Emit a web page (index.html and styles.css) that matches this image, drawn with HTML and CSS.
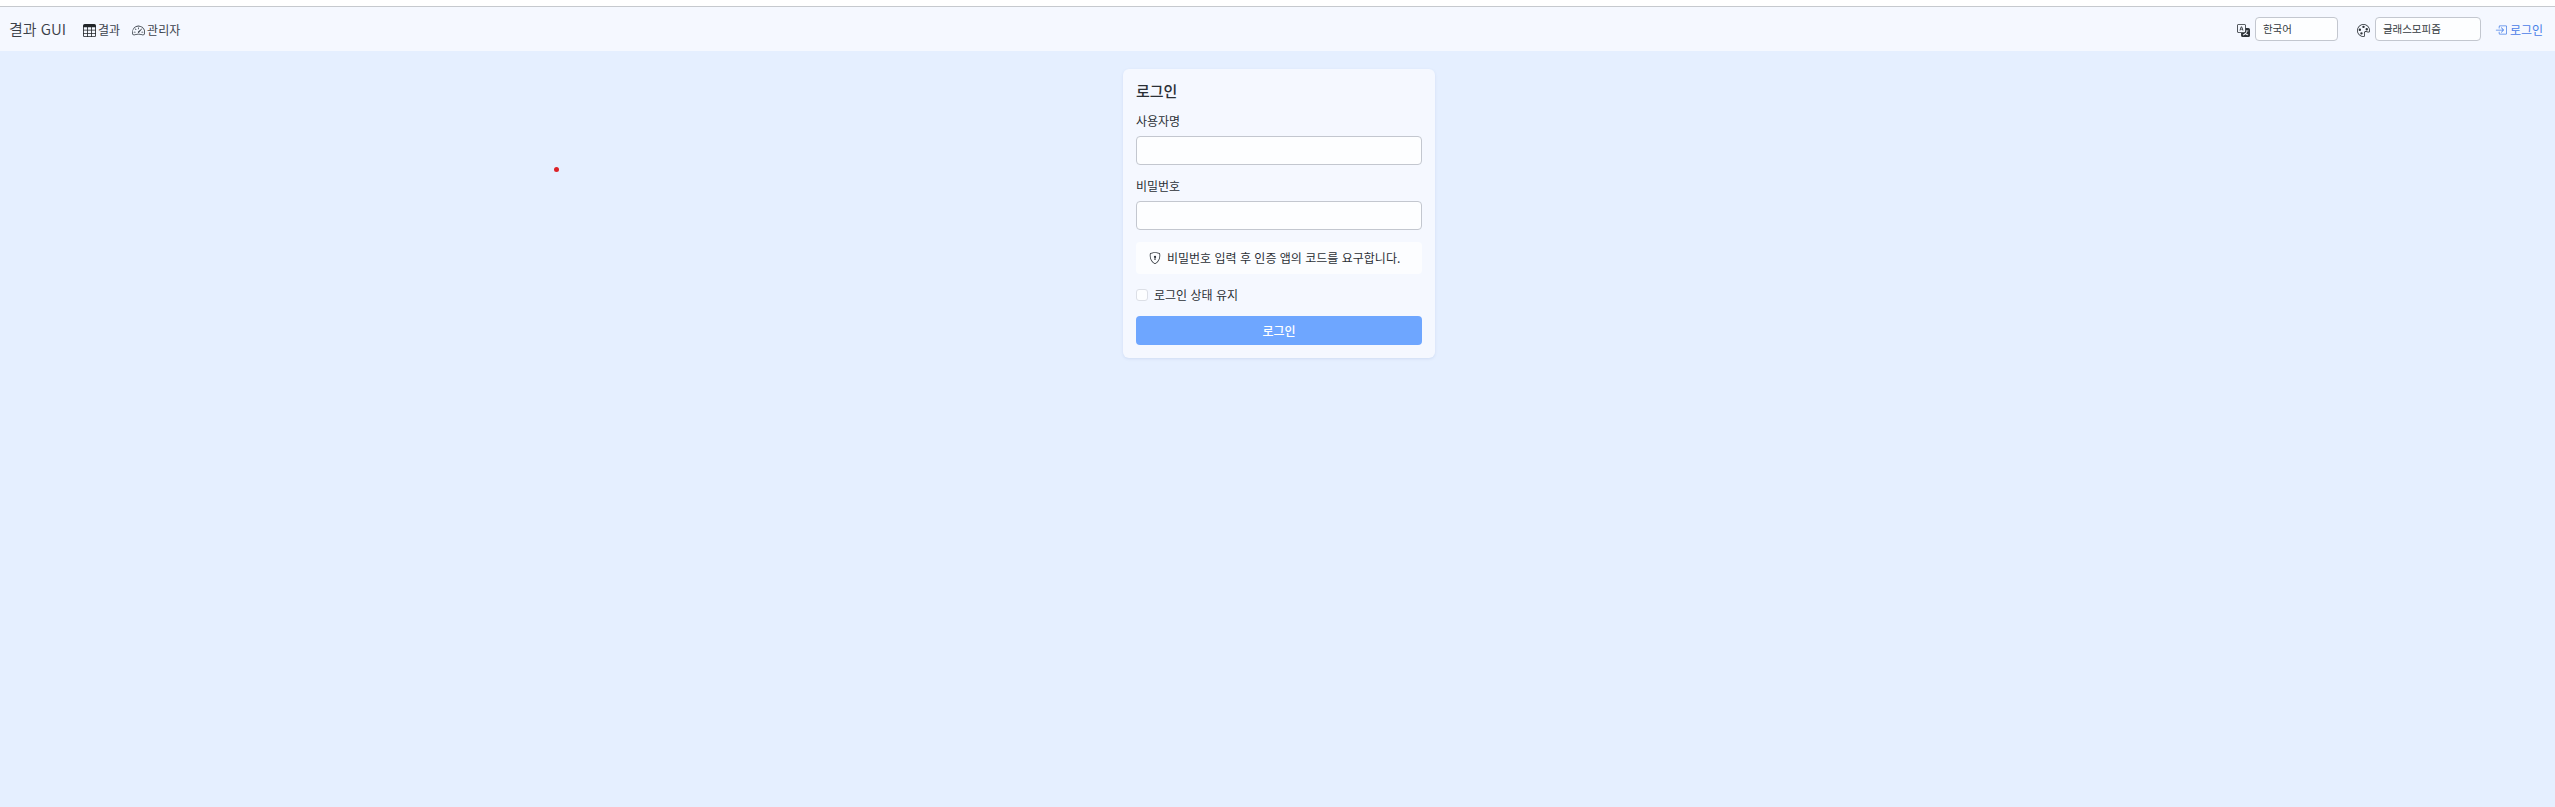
FILE: index.html
```html
<!DOCTYPE html>
<html lang="ko">
<head>
<meta charset="utf-8">
<title>결과 GUI</title>
<link rel="stylesheet" href="styles.css">
</head>
<body>
<div class="top-edge"></div>
<nav class="navbar">
  <a class="brand">결과 GUI</a>
  <a class="nav-link results"><svg class="icon" viewBox="0 0 16 16"><path d="M0 2a2 2 0 0 1 2-2h12a2 2 0 0 1 2 2v12a2 2 0 0 1-2 2H2a2 2 0 0 1-2-2zm15 2h-4v3h4zm0 4h-4v3h4zm0 4h-4v3h3a1 1 0 0 0 1-1zm-5 3v-3H6v3zm-5 0v-3H1v2a1 1 0 0 0 1 1zm-4-4h4V8H1zm0-4h4V4H1zm5-3v3h4V4zm4 4H6v3h4z"/></svg><span>결과</span></a>
  <a class="nav-link admin"><svg class="icon" viewBox="0 0 16 16"><path d="M8 4a.5.5 0 0 1 .5.5V6a.5.5 0 0 1-1 0V4.5A.5.5 0 0 1 8 4M3.732 5.732a.5.5 0 0 1 .707 0l.915.914a.5.5 0 1 1-.708.708l-.914-.915a.5.5 0 0 1 0-.707M2 10a.5.5 0 0 1 .5-.5h1.586a.5.5 0 0 1 0 1H2.5A.5.5 0 0 1 2 10m9.5 0a.5.5 0 0 1 .5-.5h1.5a.5.5 0 0 1 0 1H12a.5.5 0 0 1-.5-.5m.754-4.246a.39.39 0 0 0-.527-.02L7.547 9.31a.91.91 0 1 0 1.302 1.258l3.434-4.297a.39.39 0 0 0-.029-.518z"/><path fill-rule="evenodd" d="M0 10a8 8 0 1 1 15.547 2.661c-.442 1.253-1.845 1.602-2.932 1.25C11.309 13.488 9.475 13 8 13c-1.474 0-3.31.488-4.615.911-1.087.352-2.49.003-2.932-1.25A8 8 0 0 1 0 10m8-7a7 7 0 0 0-6.603 9.329c.203.575.923.876 1.68.63C4.397 12.533 6.358 12 8 12s3.604.532 4.923.96c.757.245 1.477-.056 1.68-.631A7 7 0 0 0 8 3"/></svg><span>관리자</span></a>
  <div class="tools">
    <svg class="icon" viewBox="0 0 16 16"><path d="M4.545 6.714 4.11 8H3l1.862-5h1.284L8 8H6.833l-.435-1.286zm1.634-.736L5.5 3.956h-.049l-.679 2.022z"/><path d="M0 2a2 2 0 0 1 2-2h7a2 2 0 0 1 2 2v3h3a2 2 0 0 1 2 2v7a2 2 0 0 1-2 2H7a2 2 0 0 1-2-2v-3H2a2 2 0 0 1-2-2zm2-1a1 1 0 0 0-1 1v7a1 1 0 0 0 1 1h7a1 1 0 0 0 1-1V2a1 1 0 0 0-1-1zm7.138 9.995q.289.451.63.846c-.748.575-1.673 1.001-2.768 1.292.178.217.451.635.555.867 1.125-.359 2.08-.844 2.886-1.494.777.665 1.739 1.165 2.93 1.472.133-.254.414-.673.629-.89-1.125-.253-2.057-.694-2.82-1.284.681-.747 1.222-1.651 1.621-2.757H14V8h-3v1.047h.765c-.318.844-.74 1.546-1.272 2.13a6 6 0 0 1-.415-.492 2 2 0 0 1-.94.31"/></svg>
    <div class="select language">한국어</div>
    <svg class="icon" viewBox="0 0 16 16"><path d="M8 5a1.5 1.5 0 1 0 0-3 1.5 1.5 0 0 0 0 3m4 3a1.5 1.5 0 1 0 0-3 1.5 1.5 0 0 0 0 3M5 7a1.5 1.5 0 1 1-3 0 1.5 1.5 0 0 1 3 0m.5 6a1.5 1.5 0 1 0 0-3 1.5 1.5 0 0 0 0 3"/><path d="M16 8c0 3.15-1.866 2.585-3.567 2.07C11.42 9.763 10.465 9.473 10 10c-.603.683-.475 1.819-.351 2.92C9.826 14.495 9.996 16 8 16a8 8 0 1 1 8-8m-8 7c.611 0 .654-.171.655-.176.078-.146.124-.464.07-1.119-.014-.168-.037-.37-.061-.591-.052-.464-.112-1.005-.118-1.462-.01-.707.083-1.61.704-2.314.369-.417.845-.578 1.272-.618.404-.038.812.026 1.16.104.343.077.702.186 1.025.284l.028.008c.346.105.658.199.953.266.653.148.904.083.991.024C14.717 9.38 15 9.161 15 8a7 7 0 1 0-7 7"/></svg>
    <div class="select theme">글래스모피즘</div>
    <a class="nav-link signin"><svg class="icon" viewBox="0 0 16 16"><path fill-rule="evenodd" d="M6 3.5a.5.5 0 0 1 .5-.5h8a.5.5 0 0 1 .5.5v9a.5.5 0 0 1-.5.5h-8a.5.5 0 0 1-.5-.5v-2a.5.5 0 0 0-1 0v2A1.5 1.5 0 0 0 6.5 14h8a1.5 1.5 0 0 0 1.5-1.5v-9A1.5 1.5 0 0 0 14.5 2h-8A1.5 1.5 0 0 0 5 3.5v2a.5.5 0 0 0 1 0z"/><path fill-rule="evenodd" d="M11.854 8.354a.5.5 0 0 0 0-.708l-3-3a.5.5 0 1 0-.708.708L10.293 7.5H1.5a.5.5 0 0 0 0 1h8.793l-2.147 2.146a.5.5 0 0 0 .708.708z"/></svg><span>로그인</span></a>
  </div>
</nav>
<main class="content">
  <form class="card">
    <h1 class="title">로그인</h1>
    <label class="label" for="user">사용자명</label>
    <input class="field" id="user" type="text">
    <label class="label" for="pass">비밀번호</label>
    <input class="field" id="pass" type="password">
    <div class="notice"><svg class="icon" viewBox="0 0 16 16"><path d="M5.338 1.59a61 61 0 0 0-2.837.856.48.48 0 0 0-.328.39c-.554 4.157.726 7.19 2.253 9.188a10.7 10.7 0 0 0 2.287 2.233c.346.244.652.42.893.533q.18.085.293.118a1 1 0 0 0 .101.025 1 1 0 0 0 .1-.025q.114-.034.294-.118c.24-.113.547-.29.893-.533a10.7 10.7 0 0 0 2.287-2.233c1.527-1.997 2.807-5.031 2.253-9.188a.48.48 0 0 0-.328-.39c-.651-.213-1.75-.56-2.837-.855C9.552 1.29 8.531 1.067 8 1.067c-.53 0-1.552.223-2.662.524zM5.072.56C6.157.265 7.31 0 8 0s1.843.265 2.928.56c1.11.3 2.229.655 2.887.87a1.54 1.54 0 0 1 1.044 1.262c.596 4.477-.787 7.795-2.465 9.99a11.8 11.8 0 0 1-2.517 2.453 7 7 0 0 1-1.048.625c-.28.132-.581.24-.829.24s-.548-.108-.829-.24a7 7 0 0 1-1.048-.625 11.8 11.8 0 0 1-2.517-2.453C1.928 10.487.545 7.169 1.141 2.692A1.54 1.54 0 0 1 2.185 1.43 63 63 0 0 1 5.072.56"/><path d="M9.5 6.5a1.5 1.5 0 0 1-1 1.415l.385 1.99a.5.5 0 0 1-.491.595h-.788a.5.5 0 0 1-.49-.595l.384-1.99a1.5 1.5 0 1 1 2-1.415"/></svg><span>비밀번호 입력 후 인증 앱의 코드를 요구합니다.</span></div>
    <label class="remember"><input class="check" type="checkbox"><span>로그인 상태 유지</span></label>
    <button class="submit" type="button">로그인</button>
  </form>
</main>
<div class="marker"></div>
</body>
</html>
```
FILE: styles.css
```css
* { box-sizing: border-box; }
body {
  margin: 0;
  height: 807px;
  overflow: hidden;
  background: #e5efff;
  color: #2b3036;
  font: 12px/18px "Noto Sans CJK KR", sans-serif;
}
.top-edge { height: 7px; background: #fff; border-bottom: 1px solid #c6c9ce; }
.navbar {
  display: flex;
  align-items: center;
  height: 44px;
  padding: 0 12px 0 9px;
  background: #f5f8ff;
}
.icon { display: block; flex: none; width: 12px; height: 12px; fill: currentColor; }
.navbar .icon { position: relative; top: 1px; }
.tools > .icon { width: 13px; height: 13px; }
.brand { width: 74px; color: #3a4048; font-size: 15px; line-height: 22px; font-weight: 350; white-space: nowrap; }
.nav-link { display: flex; align-items: center; gap: 2px; color: #3c434c; white-space: nowrap; }
.nav-link span { padding-top: 1px; }
.nav-link .icon { width: 13px; height: 13px; }
.results .icon { color: #212529; }
.admin { margin-left: 12px; }
.tools { display: flex; align-items: center; margin-left: auto; }
.select {
  height: 24px;
  margin-left: 5px;
  padding: 0 7px;
  border: 1px solid #c3c7cf;
  border-radius: 4px;
  background: #fdfeff;
  color: #343a40;
  font-size: 10.5px;
  line-height: 21px;
}
.language { width: 83px; margin-right: 19px; }
.theme { width: 106px; margin-right: 14px; }
.nav-link.signin { gap: 3px; color: #4a80e8; }
.signin .icon { width: 12px; height: 12px; }
.content { display: flex; justify-content: center; padding: 18px 0 0 3px; }
.card {
  display: flex;
  flex-direction: column;
  width: 312px;
  height: 289px;
  padding: 13px;
  border-radius: 6px;
  background: #f5f8ff;
  box-shadow: 0 1px 3px rgba(70, 100, 160, .13);
}
.title { margin: 0 0 10px; font-size: 15px; line-height: 18px; font-weight: 500; }
.label { margin-bottom: 5px; line-height: 21px; }
.field {
  width: 100%;
  height: 29px;
  margin: 0 0 10px;
  border: 1px solid #c3c7cf;
  border-radius: 4px;
  background: #fdfeff;
}
.notice {
  display: flex;
  align-items: center;
  gap: 6px;
  height: 32px;
  margin-top: 2px;
  padding: 0 0 0 13px;
  border-radius: 4px;
  background: #fcfdff;
  white-space: nowrap;
}
.remember { display: flex; align-items: center; gap: 6px; height: 18px; margin: 12px 0; }
.check {
  appearance: none;
  width: 12px;
  height: 12px;
  margin: 0;
  border: 1px solid #dcdfe6;
  border-radius: 3px;
  background: #fdfeff;
}
.submit {
  height: 29px;
  padding: 1px 0 0;
  border: 0;
  border-radius: 4px;
  background: #6ea6ff;
  color: #fff;
  font: 500 12px/28px "Noto Sans CJK KR", sans-serif;
}
.marker {
  position: absolute;
  left: 554px;
  top: 166.5px;
  width: 5px;
  height: 5px;
  border-radius: 50%;
  background: #dc2127;
}
```
